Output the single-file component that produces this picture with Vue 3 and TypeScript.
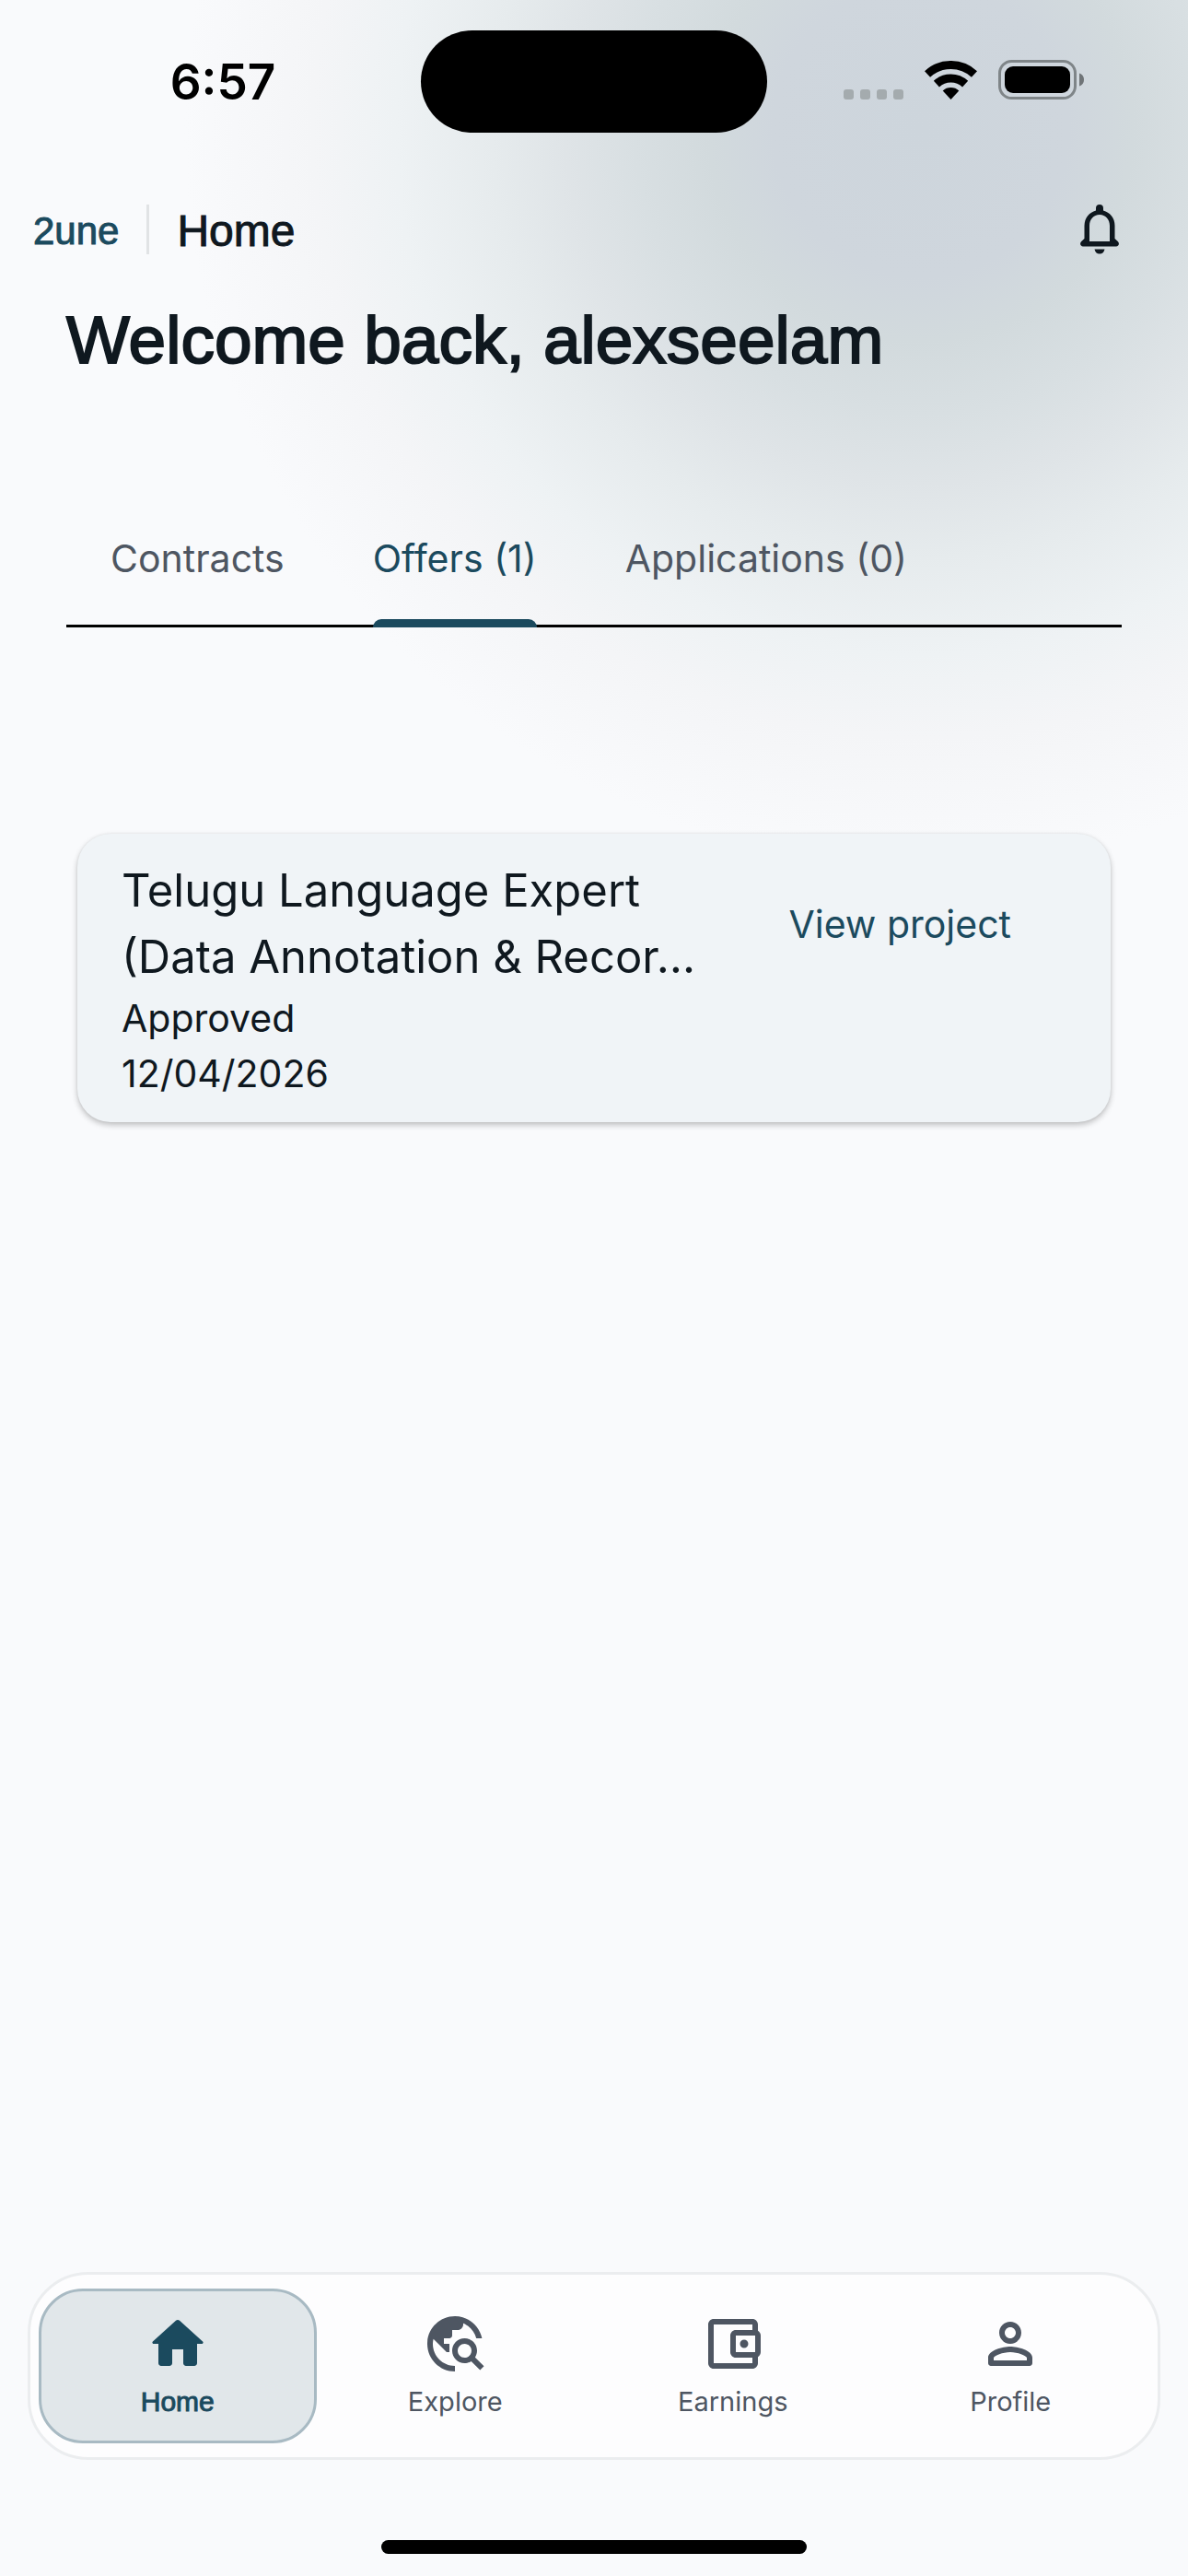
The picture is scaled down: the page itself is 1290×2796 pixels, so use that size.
<script setup lang="ts">
import { ref } from 'vue'

interface NavItem {
  label: string
  path: string
}

interface Offer {
  title: string
  status: string
  date: string
}

const tabs: string[] = ['Contracts', 'Offers (1)', 'Applications (0)']
const activeTab = ref<number>(1)
const activeNav = ref<number>(0)

const offers: Offer[] = [
  { title: 'Telugu Language Expert (Data Annotation & Recor…', status: 'Approved', date: '12/04/2026' },
]

const navItems: NavItem[] = [
  {
    label: 'Home',
    path: 'M10 19v-5h4v5c0 .55.45 1 1 1h3c.55 0 1-.45 1-1v-7h1.7c.46 0 .68-.57.33-.87L12.67 3.6c-.38-.34-.96-.34-1.34 0l-8.36 7.53c-.34.3-.13.87.33.87H5v7c0 .55.45 1 1 1h3c.55 0 1-.45 1-1z',
  },
  {
    label: 'Explore',
    path: 'M19.3 16.9c.4-.7.7-1.5.7-2.4 0-2.5-2-4.5-4.5-4.5S11 12 11 14.5s2 4.5 4.5 4.5c.9 0 1.7-.3 2.4-.7l3.2 3.2 1.4-1.4-3.2-3.2zm-3.8.1c-1.4 0-2.5-1.1-2.5-2.5s1.1-2.5 2.5-2.5 2.5 1.1 2.5 2.5-1.1 2.5-2.5 2.5zM12 20v2C6.48 22 2 17.52 2 12S6.48 2 12 2c4.84 0 8.87 3.44 9.8 8h-2.07c-.64-2.46-2.4-4.47-4.73-5.41V5c0 1.1-.9 2-2 2h-2v2c0 .55-.45 1-1 1H8v2h2v3H9l-4.79-4.79C4.08 10.79 4 11.38 4 12c0 4.41 3.59 8 8 8z',
  },
  {
    label: 'Earnings',
    path: 'M21 7.28V5c0-1.1-.9-2-2-2H5c-1.11 0-2 .9-2 2v14c0 1.1.89 2 2 2h14c1.1 0 2-.9 2-2v-2.28c.59-.35 1-.98 1-1.72V9c0-.74-.41-1.38-1-1.72zM20 9v6h-7V9h7zM5 19V5h14v2h-6c-1.1 0-2 .9-2 2v6c0 1.1.9 2 2 2h6v2H5zM17.5 12a1.5 1.5 0 1 1-3 0 1.5 1.5 0 0 1 3 0z',
  },
  {
    label: 'Profile',
    path: 'M12 6c1.1 0 2 .9 2 2s-.9 2-2 2-2-.9-2-2 .9-2 2-2zm0-2C9.790 4 8 5.790 8 8s1.790 4 4 4 4-1.790 4-4-1.790-4-4-4zm0 11c2.700 0 5.800 1.290 6 2v1H6v-.990c.2-.720 3.300-2.010 6-2.010zm0-2c-2.670 0-8 1.340-8 4v2c0 .55.45 1 1 1h14c.55 0 1-.45 1-1v-2c0-2.660-5.330-4-8-4z',
  },
]
</script>

<template>
  <div class="app">
    <div class="status">
      <div class="time">6:57</div>
      <div class="island"></div>
      <div class="indicators">
        <div class="signal"><i></i><i></i><i></i><i></i></div>
        <svg class="wifi" viewBox="0 0 57 42" aria-hidden="true">
          <g fill="none" stroke="#000" stroke-width="9">
            <path d="M3 14.500A37.500 37.500 0 0 1 54 14.500" />
            <path d="M12.900 25.100A23 23 0 0 1 44.100 25.100" />
          </g>
          <path d="M28.500 42L19.700 32.500A13 13 0 0 1 37.300 32.500Z" />
        </svg>
        <svg class="battery" viewBox="0 0 93 43" aria-hidden="true">
          <rect x="1.500" y="1.500" width="82" height="40" rx="13" fill="none" stroke="#7f8588" stroke-width="3" />
          <rect x="7" y="7" width="71" height="29" rx="9" />
          <path d="M88 14.500c3 .8 5 3.600 5 7s-2 6.200-5 7z" fill="#6f7477" />
        </svg>
      </div>
    </div>

    <header class="topbar">
      <a class="brand" href="#">2une</a>
      <span class="rule"></span>
      <span class="page">Home</span>
      <button class="bell" type="button" aria-label="Notifications">
        <svg viewBox="0 0 42 54" aria-hidden="true">
          <path fill-rule="evenodd" d="M17 6.500V4a4 4 0 0 1 8 0V6.500C32 8.500 37.500 14.500 37.500 23V37L41 40.200C43 42.500 41.500 45.500 39 45.500H3C.5 45.500 -1 42.500 1 40.200L4.500 37V23C4.500 14.500 10 8.500 17 6.500ZM10 40H32V23C32 16 27.500 11 21 11S10 16 10 23Z" />
          <path d="M15.500 48.500h11c-.5 3-2.500 5-5.500 5s-5-2-5.500-5z" />
        </svg>
      </button>
    </header>

    <main class="content">
      <h1>Welcome back, alexseelam</h1>

      <div class="tabs" role="tablist">
        <button
          v-for="(tab, i) in tabs"
          :key="tab"
          type="button"
          role="tab"
          class="tab"
          :class="{ active: i === activeTab }"
          :aria-selected="i === activeTab"
          @click="activeTab = i"
        >
          <span>{{ tab }}</span>
        </button>
      </div>

      <article v-for="offer in offers" :key="offer.title" class="card">
        <div class="info">
          <h2>{{ offer.title }}</h2>
          <p>{{ offer.status }}</p>
          <p>{{ offer.date }}</p>
        </div>
        <button class="view" type="button">View project</button>
      </article>
    </main>

    <nav class="nav">
      <button
        v-for="(item, i) in navItems"
        :key="item.label"
        type="button"
        class="nav-item"
        :class="{ active: i === activeNav }"
        @click="activeNav = i"
      >
        <svg viewBox="0 0 24 24" aria-hidden="true"><path :d="item.path" /></svg>
        <span>{{ item.label }}</span>
      </button>
    </nav>
    <div class="grabber"></div>
  </div>
</template>

<style>
body {
  margin: 0;
  background: #f9fafc;
}
</style>

<style scoped>
.app {
  box-sizing: border-box;
  display: flex;
  flex-direction: column;
  min-height: 100vh;
  font-family: Inter, "Liberation Sans", sans-serif;
  color: #0f181f;
  background: radial-gradient(
      circle at calc(100% - 290px) 140px,
      #cdd5dc 0,
      #cfd6dd 160px,
      #d2dadd 230px,
      #d8dfe2 310px,
      #dfe4e7 385px,
      #e6ebed 465px,
      #eef2f4 570px,
      #f4f5f7 660px,
      #f9fafc 800px
    )
    #f9fafc;
}

button {
  margin: 0;
  padding: 0;
  border: 0;
  background: none;
  font: inherit;
  color: inherit;
}

.status {
  display: grid;
  grid-template-columns: 1fr 376px 1fr;
  align-items: center;
  height: 177px;
}

.time {
  padding-left: 27px;
  text-align: center;
  font-size: 53px;
  line-height: 60px;
  font-weight: 600;
  color: #000;
}

.island {
  height: 111px;
  border-radius: 56px;
  background: #000;
}

.indicators {
  display: flex;
  justify-content: flex-end;
  align-items: flex-end;
  padding: 0 113px 4px 0;
}

.signal {
  display: flex;
  gap: 7px;
  margin-right: 23px;
}

.signal i {
  width: 11px;
  height: 11px;
  border-radius: 3px;
  background: #a4abae;
}

.wifi {
  width: 57px;
  height: 42px;
  margin-right: 23px;
}

.battery {
  width: 93px;
  height: 43px;
}

.topbar {
  display: flex;
  align-items: center;
  height: 144px;
  padding: 0 72px 0 36px;
}

.brand,
.page,
h1,
.nav-item.active {
  font-family: "Liberation Sans", Arial, sans-serif;
  font-weight: 400;
  -webkit-text-stroke: 1px currentColor;
}

.brand,
.page {
  padding-top: 4px;
  line-height: 60px;
}

.brand {
  font-size: 42px;
  color: #1b4a5e;
  text-decoration: none;
}

.rule {
  width: 3px;
  height: 54px;
  margin: 0 30px;
  background: #e1e3e5;
}

.page {
  font-size: 48px;
}

.bell {
  width: 48px;
  height: 54px;
  margin-left: auto;
}

.bell svg {
  display: block;
  width: 42px;
  height: 54px;
  margin: 0 auto;
  fill: #0f181f;
}

.content {
  flex: 1;
  padding: 0 72px;
}

h1 {
  margin: 0;
  font-size: 73px;
  line-height: 96px;
  -webkit-text-stroke-width: 2px;
}

.tabs {
  display: flex;
  margin-top: 117px;
  border-bottom: 3px solid #000;
}

.tab {
  height: 144px;
  padding: 0 48px;
  font-size: 41px;
  line-height: 60px;
  color: #4e5662;
}

.tab span {
  position: relative;
  display: block;
  padding: 42px 0;
}

.tab.active {
  color: #1b4a5e;
}

.tab.active span::after {
  content: "";
  position: absolute;
  right: 0;
  bottom: -3px;
  left: 0;
  height: 9px;
  border-radius: 9px 9px 0 0;
  background: #1b4a5e;
}

.card {
  display: flex;
  align-items: flex-start;
  justify-content: space-between;
  margin: 224px 12px 0;
  padding: 26px 48px 23px;
  border-radius: 36px;
  background: #f0f4f7;
  box-shadow: 0 3px 6px rgba(0, 0, 0, 0.24), 0 0 3px rgba(0, 0, 0, 0.06);
}

.info {
  width: 636px;
}

h2 {
  margin: 0;
  font-size: 49px;
  line-height: 72px;
  font-weight: 400;
}

p {
  margin: 0;
  font-size: 41px;
  line-height: 60px;
}

.view {
  margin: 42px 60px 0 0;
  font-size: 41px;
  line-height: 60px;
  color: #1b4a5e;
}

.nav {
  display: grid;
  grid-template-columns: repeat(4, 1fr);
  margin: 0 30px 87px;
  padding: 15px 9px;
  border: 3px solid #ebedef;
  border-radius: 66px;
  background: #fdfdfe;
}

.nav-item {
  display: flex;
  flex-direction: column;
  align-items: center;
  height: 168px;
  padding-top: 21px;
  border: 3px solid transparent;
  border-radius: 48px;
  font-size: 29px;
  line-height: 36px;
  color: #4e5662;
}

.nav-item svg {
  width: 72px;
  height: 72px;
  margin-bottom: 9px;
  fill: currentColor;
}

.nav-item.active {
  border-color: #a8bac3;
  background: #e1e7ea;
  color: #1b4a5e;
  font-size: 30px;
}

.grabber {
  width: 462px;
  height: 15px;
  margin: 0 auto 24px;
  border-radius: 8px;
  background: #000;
}
</style>
